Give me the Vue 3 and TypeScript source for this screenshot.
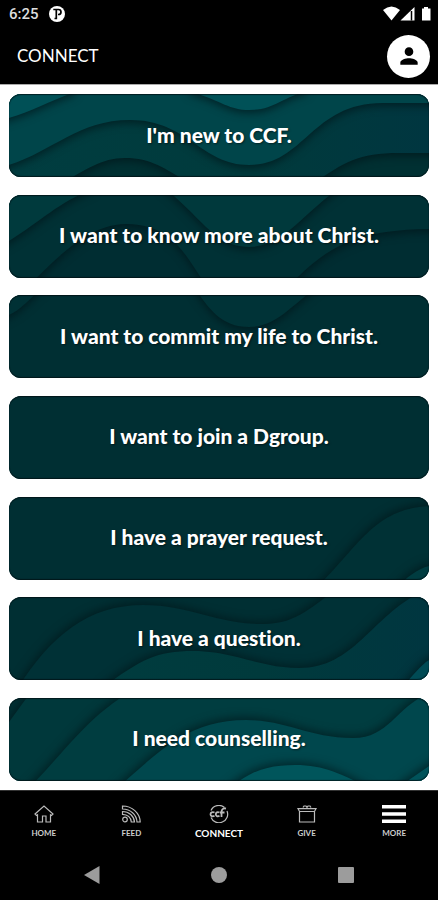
<script setup lang="ts">
interface Wave {
  d: string
  fill: string
}

interface Card {
  label: string
  base: string
  cast: 'down' | 'up'
  waves: Wave[]
}

interface Tab {
  label: string
  icon: 'home' | 'feed' | 'connect' | 'give' | 'more'
}

const cards: Card[] = [
  {
    label: "I'm new to CCF.",
    base: '#003032',
    cast: 'down',
    waves: [
      { d: 'M-9 -9V90H50C78 76 92 64 116 64C142 64 155 74 182 90H304C335 68 350 59 390 59H430V-9Z', fill: 'url(#slope)' },
      { d: 'M-9 -9V74L0 71C44 57 70 26 121 26C179 26 192 71 240 71C296 71 302 9 374 9H430V-9Z', fill: '#00454a' },
      { d: 'M-9 -9V27L0 24C22 18 38 8 66 -2V-9Z', fill: '#005056' },
      { d: 'M180 -9V-3C215 8 220 16 240 16C265 16 270 5 298 -3V-9Z', fill: '#005157' },
    ],
  },
  {
    label: 'I want to know more about Christ.',
    base: '#002d32',
    cast: 'down',
    waves: [
      { d: 'M-9 -9V110H0C35 78 72 29 117 29C166 29 178 64 200 95H276C315 55 340 35 420 34H430V-9Z', fill: '#003135' },
      { d: 'M-9 -9V51L0 46C32 26 50 7 84 -6V-9Z', fill: '#003a3d' },
      { d: 'M152 -9C190 18 204 52 240 52C276 52 296 15 334 -9Z', fill: '#00393c' },
    ],
  },
  {
    label: 'I want to commit my life to Christ.',
    base: '#002f33',
    cast: 'down',
    waves: [
      { d: 'M-9 -9V25L0 20C12 15 20 4 36 -9Z', fill: '#003135' },
      { d: 'M184 -9C200 14 212 32 240 32C268 32 282 10 310 -9Z', fill: '#003337' },
    ],
  },
  { label: 'I want to join a Dgroup.', base: '#002f33', cast: 'up', waves: [] },
  {
    label: 'I have a prayer request.',
    base: '#002f33',
    cast: 'up',
    waves: [
      { d: 'M306 92C350 50 364 12 420 9H430V92Z', fill: '#003135' },
      { d: 'M386 92C398 80 408 72 420 69H430V92Z', fill: '#003c40' },
    ],
  },
  {
    label: 'I have a question.',
    base: '#002f33',
    cast: 'up',
    waves: [
      { d: 'M8 92C42 38 80 8 134 8C182 8 206 27 254 27C290 27 304 7 330 -9H430V92Z', fill: '#003136' },
      { d: 'M92 92C132 62 148 54 184 54C226 54 250 71 290 71C345 71 362 20 412 -5L430 -9V92Z', fill: 'url(#slope)' },
      { d: 'M392 92C404 78 412 68 420 63L430 58V92Z', fill: '#004b55' },
    ],
  },
  {
    label: 'I need counselling.',
    base: '#003034',
    cast: 'up',
    waves: [
      { d: 'M-9 36L0 24L24 -9H430V92H-9Z', fill: '#00383b' },
      { d: 'M18 92C58 52 78 18 126 -9H430V92Z', fill: '#003d40' },
      { d: 'M106 92C150 54 178 22 237 22C278 22 300 40 344 40C380 40 386 10 420 -5L430 -9V92Z', fill: '#00474d' },
      { d: 'M218 92C242 72 260 67 286 67C316 67 332 76 364 92Z', fill: '#00555b' },
      { d: 'M386 92C402 80 412 74 420 68L430 62V92Z', fill: '#00535a' },
    ],
  },
]

const tabs: Tab[] = [
  { label: 'HOME', icon: 'home' },
  { label: 'FEED', icon: 'feed' },
  { label: 'CONNECT', icon: 'connect' },
  { label: 'GIVE', icon: 'give' },
  { label: 'MORE', icon: 'more' },
]
</script>

<template>
  <div class="screen">
    <header class="top">
      <div class="status">
        <div class="status-group">
          <span class="clock">6:25</span>
          <svg class="badge" viewBox="0 0 16 16" aria-hidden="true">
            <circle cx="8" cy="8" r="8" fill="#fff" />
            <path d="M4.300 3.500H7.300V12.500H5.500M7.300 3.500H9.500A2.500 2.500 0 0 1 9.500 8.500H9" fill="none" stroke="#000" stroke-width="1.700" />
          </svg>
        </div>
        <svg class="signals" viewBox="0 0 48 16" aria-hidden="true">
          <path d="M0 4Q8.500 -3 17 4L8.500 14.500Z" fill="#fff" />
          <path d="M17.500 14.500L31.500 1V14.500Z" fill="#fff" />
          <path d="M28.500 5V14.500" stroke="#000" stroke-width="1.500" />
          <path d="M39 2.500H41V1H45V2.500H47.500V14.500H39Z" fill="#fff" />
        </svg>
      </div>
      <div class="bar">
        <h1>CONNECT</h1>
        <button class="profile" type="button" aria-label="Profile">
          <svg viewBox="0 0 24 24" aria-hidden="true">
            <path d="M12 12c2.210 0 4-1.790 4-4s-1.790-4-4-4-4 1.790-4 4 1.790 4 4 4zm0 2c-2.670 0-8 1.340-8 4v2h16v-2c0-2.660-5.330-4-8-4z" fill="#000" />
          </svg>
        </button>
      </div>
    </header>

    <main class="list">
      <button v-for="(card, index) in cards" :key="card.label" class="card" type="button">
        <svg class="waves" viewBox="0 0 420 83" preserveAspectRatio="none" aria-hidden="true">
          <defs v-if="index === 0">
            <linearGradient id="slope" gradientUnits="userSpaceOnUse" x1="0" y1="0" x2="420" y2="0">
              <stop offset="0" stop-color="#003d40" />
              <stop offset="0.6" stop-color="#003a3c" />
              <stop offset="1" stop-color="#003640" />
            </linearGradient>
          </defs>
          <rect width="420" height="83" :fill="card.base" />
          <path v-for="wave in card.waves" :key="wave.d" :class="card.cast" :d="wave.d" :fill="wave.fill" />
        </svg>
        <span class="label">{{ card.label }}</span>
      </button>
    </main>

    <footer class="bottom">
      <nav class="tabs" aria-label="Main">
        <a v-for="tab in tabs" :key="tab.label" class="tab" :class="{ active: tab.icon === 'connect' }" href="#">
          <svg v-if="tab.icon === 'home'" class="icon" viewBox="0 0 20 18" aria-hidden="true">
            <path d="M1 9L10 1L19 9L17.500 10.500L16.500 9.800V17H12V11H8.500V17H3.500V9.800L2.500 10.500Z" />
          </svg>
          <svg v-else-if="tab.icon === 'feed'" class="icon" viewBox="0 0 20 18" aria-hidden="true">
            <path d="M1.500 1C11 1 19 8 19.200 17H16C15.500 9.500 9.500 4.200 1.500 4ZM1.500 6.500C8 6.500 13 11 13.500 17H10.300C10 12.500 6.500 9.500 1.500 9.300Z" />
            <circle cx="4" cy="14.500" r="2.300" />
          </svg>
          <svg v-else-if="tab.icon === 'connect'" class="icon" viewBox="0 0 20 18" aria-hidden="true">
            <path d="M2 5.500A8.500 8.300 0 0 1 15.500 2.500M18 6A8.500 8.300 0 0 1 2 12.500" />
            <path d="M5.500 7.500C3.500 6.500 1.500 7.500 1.500 9.200S3.500 12 5.500 10.800M10.500 7.500C8.500 6.500 6.800 7.500 6.800 9.200S8.500 12 10.500 10.800" stroke-width="1.800" />
            <path d="M12.500 12V7C12.500 4.500 14 3 17 3.500M11 7.500H15.500" stroke-width="1.800" />
          </svg>
          <svg v-else-if="tab.icon === 'give'" class="icon" viewBox="0 0 20 18" aria-hidden="true">
            <path d="M2.500 6.500H17.500V17H2.500ZM1 3.700H19L17.500 6.500H2.500ZM6 2.500L7 1H9L10 2.500L11 1H13L14 2.500" />
          </svg>
          <svg v-else class="icon wide" viewBox="0 0 24 18" aria-hidden="true">
            <path class="solid" d="M0 0H24V3.500H0ZM0 7.200H24V10.700H0ZM0 14.500H24V18H0Z" />
          </svg>
          <span>{{ tab.label }}</span>
        </a>
      </nav>
      <div class="system">
        <button type="button" aria-label="Back">
          <svg viewBox="0 0 18 18" aria-hidden="true"><path d="M1 9L16.500 0V18Z" /></svg>
        </button>
        <button type="button" aria-label="Home">
          <svg viewBox="0 0 18 18" aria-hidden="true"><circle cx="9" cy="9" r="8" /></svg>
        </button>
        <button type="button" aria-label="Recent apps">
          <svg viewBox="0 0 18 18" aria-hidden="true"><rect x="1" y="1" width="16" height="16" rx="1" /></svg>
        </button>
      </div>
    </footer>
  </div>
</template>

<style>
body {
  margin: 0;
  background: #fff;
}
</style>

<style scoped>
.screen {
  display: flex;
  flex-direction: column;
  min-height: 100vh;
  font-family: Lato, 'Open Sans', sans-serif;
  font-variant-ligatures: none;
  color: #fff;
}

button {
  padding: 0;
  border: 0;
  font: inherit;
  font-variant-ligatures: inherit;
  color: inherit;
  cursor: pointer;
}

.top {
  background: #000;
  border-bottom: 1px solid #aaa;
}

.status {
  display: flex;
  align-items: center;
  justify-content: space-between;
  height: 28px;
  padding: 0 7px 0 9px;
}

.status-group {
  display: flex;
  align-items: center;
  gap: 10px;
}

.clock {
  font: 500 15px/28px Roboto, sans-serif;
  color: #ddd;
}

.badge {
  width: 16px;
  height: 16px;
}

.signals {
  width: 48px;
  height: 16px;
}

.bar {
  display: flex;
  align-items: center;
  justify-content: space-between;
  height: 56px;
  padding: 0 8px 0 17px;
}

h1 {
  margin: 0;
  font-size: 17px;
  font-weight: 400;
  line-height: 24px;
}

.profile {
  display: grid;
  place-items: center;
  width: 43px;
  height: 43px;
  border-radius: 50%;
  background: #fff;
}

.profile svg {
  width: 26px;
  height: 26px;
}

.list {
  flex: 1;
  display: flex;
  flex-direction: column;
  justify-content: space-between;
  gap: 12px;
  padding: 9px;
}

.card {
  display: grid;
  height: 83px;
  overflow: hidden;
  border-radius: 12px;
  background: #002f33;
}

.waves,
.label {
  grid-area: 1 / 1;
}

.waves {
  display: block;
  width: 100%;
  height: 83px;
}

.down {
  filter: drop-shadow(0 3px 4px rgba(0, 20, 24, 0.7));
}

.up {
  filter: drop-shadow(-1px -3px 4px rgba(0, 20, 24, 0.6));
}

.label {
  z-index: 1;
  display: grid;
  place-items: center;
  padding-bottom: 2px;
  border-radius: 12px;
  box-shadow: inset 0 1px 1px rgba(0, 12, 16, 0.7), inset 0 -1px 1px rgba(0, 12, 16, 0.7);
  font-size: 21px;
  font-weight: 900;
  line-height: 26px;
  text-shadow: 1px 1px 2px rgba(0, 0, 0, 0.5);
}

.bottom {
  background: #000;
  border-top: 1px solid #333;
}

.tabs {
  display: grid;
  grid-template-columns: repeat(5, 1fr);
  height: 59px;
}

.tab {
  display: flex;
  flex-direction: column;
  align-items: center;
  gap: 4px;
  padding-top: 14px;
  font-size: 8px;
  font-weight: 700;
  line-height: 12px;
  color: #ccc;
  text-decoration: none;
}

.tab.active {
  font-size: 10px;
  color: #fff;
}

.icon {
  width: 20px;
  height: 18px;
  fill: none;
  stroke: #bbb;
  stroke-width: 1.2;
}

.icon.wide {
  width: 24px;
}

.solid {
  fill: #fff;
  stroke: none;
}

.system {
  display: flex;
  justify-content: space-between;
  height: 50px;
  padding: 0 19%;
}

.system button {
  display: grid;
  place-items: center;
  width: 18px;
  background: none;
}

.system svg {
  width: 18px;
  height: 18px;
  fill: #9c9c9c;
}
</style>
